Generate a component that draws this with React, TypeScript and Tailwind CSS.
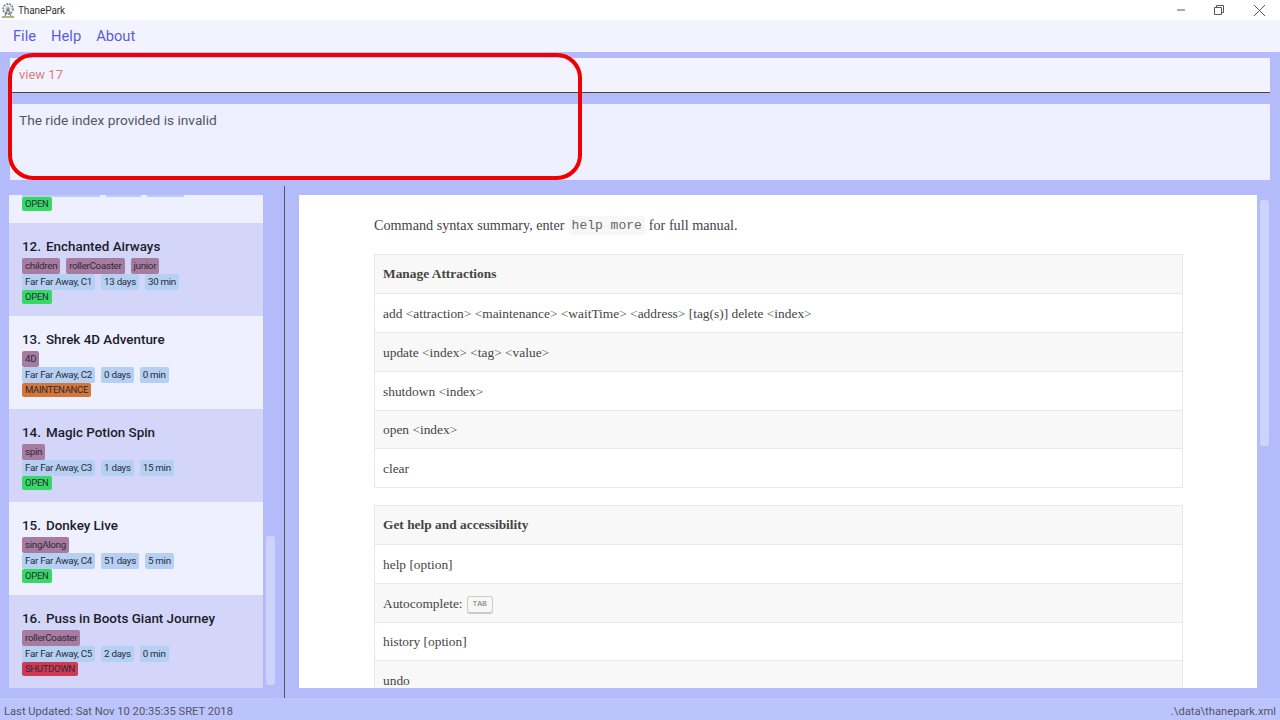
import React from 'react';

type Ride = {
  num: number;
  name: string;
  tags: string[];
  address: string;
  days: string;
  wait: string;
  status: 'OPEN' | 'MAINTENANCE' | 'SHUTDOWN';
};

const rides: Ride[] = [
  { num: 12, name: 'Enchanted Airways', tags: ['children', 'rollerCoaster', 'junior'], address: 'Far Far Away, C1', days: '13 days', wait: '30 min', status: 'OPEN' },
  { num: 13, name: 'Shrek 4D Adventure', tags: ['4D'], address: 'Far Far Away, C2', days: '0 days', wait: '0 min', status: 'MAINTENANCE' },
  { num: 14, name: 'Magic Potion Spin', tags: ['spin'], address: 'Far Far Away, C3', days: '1 days', wait: '15 min', status: 'OPEN' },
  { num: 15, name: 'Donkey Live', tags: ['singAlong'], address: 'Far Far Away, C4', days: '51 days', wait: '5 min', status: 'OPEN' },
  { num: 16, name: 'Puss in Boots Giant Journey', tags: ['rollerCoaster'], address: 'Far Far Away, C5', days: '2 days', wait: '0 min', status: 'SHUTDOWN' },
];

const Chip = ({ text, className }: { text: string; className: string }) => (
  <span className={`h-4 px-[3px] rounded-[2px] text-[9.8px] tracking-[-0.3px] leading-4 text-[#2b2b3a] ${className}`}>{text}</span>
);

const Status = ({ status }: { status: Ride['status'] }) => {
  const color = status === 'OPEN' ? 'bg-[#36d965]' : status === 'MAINTENANCE' ? 'bg-[#d3763a]' : 'bg-[#d13a52]';
  return (
    <div className="flex h-[14px]">
      <span className={`px-[3px] rounded-[2px] text-[9.5px] tracking-[-0.3px] leading-[14px] text-[#2b2b3a] ${color}`}>{status}</span>
    </div>
  );
};

const RideCard = ({ ride, shaded }: { ride: Ride; shaded: boolean }) => (
  <div className={`h-[93px] pl-[13px] pt-[13px] ${shaded ? 'bg-[#d3d6f8]' : 'bg-[#eeefff]'}`}>
    <div className="h-[22px] text-[13.4px] font-medium leading-[22px] text-[#1c1c28]">
      <span className="inline-block w-[24px]">{ride.num}.</span>
      {ride.name}
    </div>
    <div className="flex gap-[6px]">
      {ride.tags.map((t) => (
        <Chip key={t} text={t} className="bg-[#a87ba0]" />
      ))}
    </div>
    <div className="flex gap-[6px]">
      <Chip text={ride.address} className="bg-[#b6d0f3]" />
      <Chip text={ride.days} className="bg-[#b6d0f3]" />
      <Chip text={ride.wait} className="bg-[#b6d0f3]" />
    </div>
    <Status status={ride.status} />
  </div>
);

const Row = ({ children, shaded, tight }: { children: React.ReactNode; shaded?: boolean; tight?: boolean }) => (
  <div className={`flex items-center px-2 border-b border-[#e8e8e8] text-[13.4px] text-[#444] ${tight ? 'h-[38px] pt-[2px]' : 'h-[39px] pt-[3px]'} ${shaded ? 'bg-[#f8f8f8]' : 'bg-white'}`}>
    {children}
  </div>
);

const HeadRow = ({ children }: { children: React.ReactNode }) => (
  <div className="h-[39px] pt-[1px] flex items-center px-2 border-b border-[#e8e8e8] bg-[#f8f8f8] text-[13.4px] font-bold text-[#444]">
    {children}
  </div>
);

const FerrisIcon = () => (
  <svg width="14" height="16" viewBox="0 0 14 16" fill="none">
    <circle cx="7" cy="7" r="5" stroke="#5b7f8c" strokeWidth="1.5" strokeDasharray="2 1" />
    <circle cx="7" cy="7" r="1.8" fill="#d9a441" />
    <path d="M7 2v10M2 7h10M3.5 3.5l7 7M10.5 3.5l-7 7" stroke="#7fa3ae" strokeWidth="0.6" />
    <path d="M4 14l3-7 3 7" stroke="#6b6b6b" strokeWidth="1" />
    <path d="M1 15h12" stroke="#8aa04f" strokeWidth="1.5" />
  </svg>
);

const App = () => {
  return (
    <div className="relative h-[720px] w-[1280px] overflow-hidden flex flex-col bg-[#b3bbfb] font-['Roboto',sans-serif]">
      {/* title bar */}
      <div className="h-5 flex items-center bg-white pl-[1px] shrink-0">
        <FerrisIcon />
        <span className="ml-[3px] text-[10px] tracking-[-0.1px] text-[#333]">ThanePark</span>
        <div className="ml-auto flex items-center text-[#555]">
          <svg width="8" height="10" viewBox="0 0 8 10" className="mr-[29px]"><path d="M0 5h8" stroke="currentColor" /></svg>
          <svg width="10" height="10" viewBox="0 0 10 10" className="mr-[30px]" fill="none"><path d="M2.5 2V.5h7v7H8M.5 2.5h7v7h-7z" stroke="currentColor" /></svg>
          <svg width="11" height="11" viewBox="0 0 11 11" className="mr-[15px]"><path d="M0 0l11 11M11 0L0 11" stroke="currentColor" /></svg>
        </div>
      </div>

      {/* menu */}
      <div className="h-8 flex items-center gap-[15px] bg-[#f3f3ff] pl-[13px] pt-[1px] shrink-0 text-[14.7px] text-[#5a5ce0]">
        <span>File</span>
        <span>Help</span>
        <span>About</span>
      </div>

      {/* command box */}
      <div className="px-[10px] pt-[6px] shrink-0">
        <div className="h-[35px] flex items-center bg-[#f3f3ff] border-b border-[#444] pl-[9px] text-[13px] text-[#d8807a]">view 17</div>
      </div>

      {/* result box */}
      <div className="px-[10px] pt-[11px] pb-[6px] shrink-0">
        <div className="h-[76px] bg-[#eeefff] pl-[9px] pt-[6px] text-[13.7px] text-[#555560]">The ride index provided is invalid</div>
      </div>

      {/* main */}
      <div className="flex-1 min-h-0 flex">
        {/* ride list */}
        <div className="w-[284px] shrink-0 flex pl-[9px] pt-[9px] pb-[10px]">
          <div className="w-[254px] overflow-hidden">
            <div className="h-[28px] bg-[#eeefff] pl-[13px] overflow-hidden">
              <div className="flex gap-[6px] h-[2px] overflow-hidden">
                <span className="w-[78px] h-[2px] bg-[#b6d0f3]" />
                <span className="w-[35px] h-[2px] bg-[#b6d0f3]" />
                <span className="w-[37px] h-[2px] bg-[#b6d0f3]" />
              </div>
              <Status status="OPEN" />
            </div>
            {rides.map((r, i) => (
              <RideCard key={r.num} ride={r} shaded={i % 2 === 0} />
            ))}
          </div>
          <div className="w-[21px] pl-[3px] flex flex-col justify-end">
            <div className="w-[9px] h-[149px] mb-[3px] rounded-[3px] bg-[#ced3fd]" />
          </div>
        </div>

        {/* divider */}
        <div className="w-px bg-[#555] shrink-0" />

        {/* help page */}
        <div className="flex-1 min-w-0 flex pl-[14px] pt-[9px] pb-[10px]">
          <div className="w-[958px] bg-white pl-[75px] overflow-hidden">
            <div className="h-[59px] flex items-center pt-[2px] text-[14.2px] font-['Liberation_Serif',serif] text-[#444]">
              Command syntax summary, enter
              <code className="mx-[4px] px-[3px] rounded-[3px] bg-[#f7f7f7] font-['Liberation_Mono',monospace] text-[13px] text-[#666]">help more</code>
              for full manual.
            </div>
            <div className="w-[809px] font-['Liberation_Serif',serif]">
              <div className="border border-b-0 border-[#e8e8e8]">
                <HeadRow>Manage Attractions</HeadRow>
                <Row>add &lt;attraction&gt; &lt;maintenance&gt; &lt;waitTime&gt; &lt;address&gt; [tag(s)] delete &lt;index&gt;</Row>
                <Row shaded>update &lt;index&gt; &lt;tag&gt; &lt;value&gt;</Row>
                <Row>shutdown &lt;index&gt;</Row>
                <Row shaded tight>open &lt;index&gt;</Row>
                <Row>clear</Row>
              </div>
              <div className="border border-b-0 border-[#e8e8e8] mt-[17px]">
                <HeadRow>Get help and accessibility</HeadRow>
                <Row>help [option]</Row>
                <Row shaded>
                  Autocomplete:
                  <kbd className="ml-[4px] h-[18px] w-[26px] flex items-center justify-center rounded-[3px] border border-[#ccc] border-b-2 bg-[#f7f7f7] font-['Liberation_Mono',monospace] text-[8px] text-[#777]">TAB</kbd>
                </Row>
                <Row tight>history [option]</Row>
                <Row shaded>undo</Row>
              </div>
            </div>
          </div>
          <div className="ml-[3px] mt-[5px] mb-[242px] w-[9px] rounded-[3px] bg-[#ced3fd]" />
        </div>
      </div>

      {/* status bar */}
      <div className="h-[22px] shrink-0 flex items-end justify-between bg-[#bcc4fd] pl-[4px] pr-[4px] pb-[1px] text-[11.2px] leading-[14px] text-[#555560]">
        <span>Last Updated: Sat Nov 10 20:35:35 SRET 2018</span>
        <span>.\data\thanepark.xml</span>
      </div>

      {/* red highlight */}
      <div className="absolute left-[8px] top-[53px] w-[574px] h-[127px] rounded-[25px] border-4 border-[#f00000]" />
    </div>
  );
};

export default App;
